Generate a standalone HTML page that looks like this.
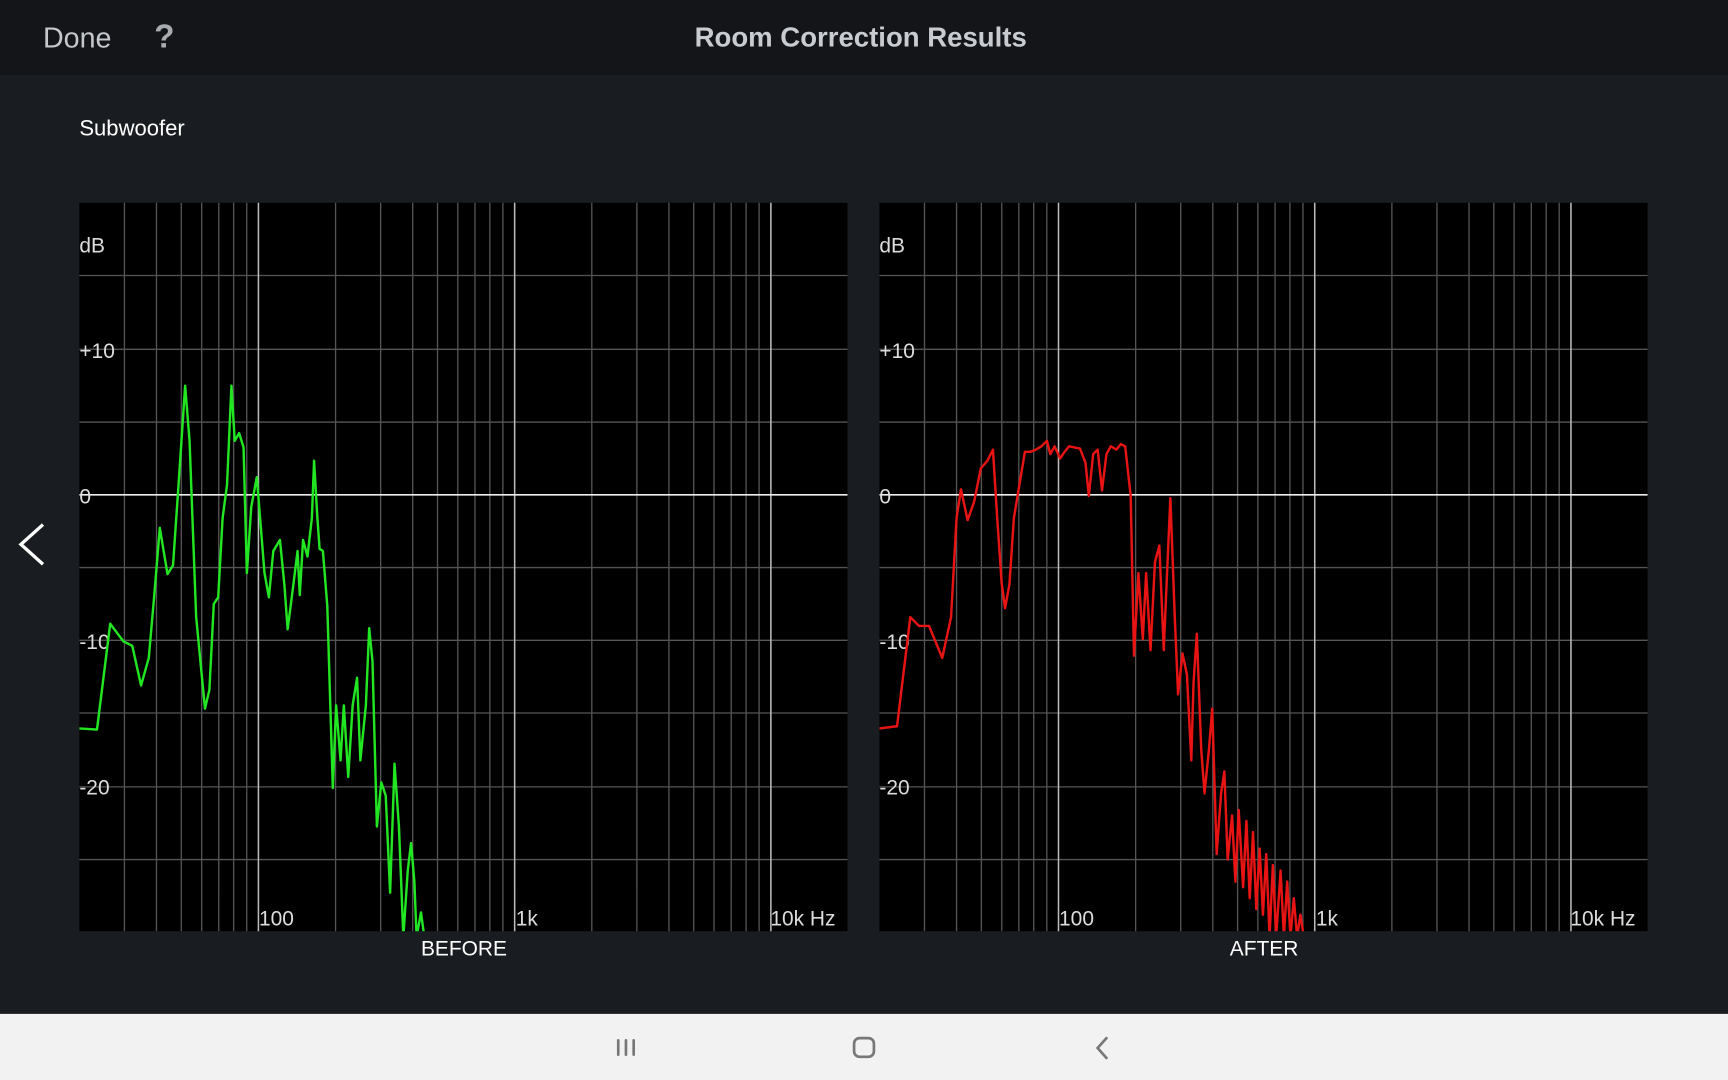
<!DOCTYPE html>
<html><head><meta charset="utf-8"><style>
html,body{margin:0;padding:0;background:#191c21;width:1728px;height:1080px;overflow:hidden}
#s{position:absolute;left:0;top:0;width:1568px;height:980px;transform:scale(1.10204);transform-origin:0 0;background:#191c21;font-family:"Liberation Sans",sans-serif}
.hdr{position:absolute;left:0;top:0;width:1568px;height:68px;background:#131519}
.t{position:absolute;white-space:nowrap}
.nav{position:absolute;left:0;top:920px;width:1568px;height:60px;background:#f2f2f2}
</style></head><body><div id="s">
<div class="hdr"></div>
<div class="t" style="left:39px;top:19px;font-size:26px;color:#c4c8cc">Done</div>
<div class="t" style="left:140px;top:17px;font-size:30px;font-weight:bold;color:#a8abb0">?</div>
<div class="t" style="left:0;width:1562px;text-align:center;top:20px;font-size:25px;font-weight:bold;color:#c8ccd0">Room Correction Results</div>
<div class="t" style="left:72px;top:106px;font-size:20px;color:#fff">Subwoofer</div>
<svg width="1568" height="920" style="position:absolute;left:0;top:0" font-family="Liberation Sans, sans-serif">
<defs>
<symbol id="g" width="697" height="661" overflow="visible">
<rect width="697" height="661" fill="#000"/>
<g stroke="#555" stroke-width="1.2">
<line x1="0" x2="697" y1="66" y2="66"/><line x1="0" x2="697" y1="133" y2="133"/><line x1="0" x2="697" y1="199" y2="199"/><line x1="0" x2="697" y1="331" y2="331"/><line x1="0" x2="697" y1="397" y2="397"/><line x1="0" x2="697" y1="463" y2="463"/><line x1="0" x2="697" y1="530" y2="530"/><line x1="0" x2="697" y1="596" y2="596"/>
<path d="M40.9 0V661M70 0V661M92.5 0V661M111 0V661M126.5 0V661M140 0V661M151.9 0V661M232.5 0V661M273.4 0V661M302.5 0V661M325 0V661M343.4 0V661M359 0V661M372.5 0V661M384.3 0V661M465 0V661M505.9 0V661M535 0V661M557.5 0V661M575.9 0V661M591.5 0V661M605 0V661M616.8 0V661"/>
</g>
<g stroke="#bbb" stroke-width="1.4"><path d="M162.5 0V661M395 0V661M627.5 0V661"/></g>
<line x1="0" x2="697" y1="265" y2="265" stroke="#eee" stroke-width="1.4"/>
</symbol>
<clipPath id="c1"><rect x="72" y="184" width="697" height="661"/></clipPath>
<clipPath id="c2"><rect x="798" y="184" width="697" height="661"/></clipPath>
</defs>
<use href="#g" x="72" y="184"/>
<use href="#g" x="798" y="184"/>
<g fill="#ddd" font-size="19">
<text x="72" y="229">dB</text><text x="72" y="325">+10</text><text x="72" y="457">0</text><text x="72" y="589">-10</text><text x="72" y="721">-20</text>
<text x="235" y="840">100</text><text x="468" y="840">1k</text><text x="699" y="840">10k Hz</text>
<text x="798" y="229">dB</text><text x="798" y="325">+10</text><text x="798" y="457">0</text><text x="798" y="589">-10</text><text x="798" y="721">-20</text>
<text x="961" y="840">100</text><text x="1194" y="840">1k</text><text x="1425" y="840">10k Hz</text>
</g>
<g fill="#fff" font-size="19" text-anchor="middle"><text x="421" y="867">BEFORE</text><text x="1147" y="867">AFTER</text></g>
<polyline clip-path="url(#c1)" fill="none" stroke="#22e622" stroke-width="2.2" stroke-linejoin="round" points="72,661 88,662 100,566 112,582 120,586 128,622 135,597 140,540 145,479 152,521 157,513 162,440 168,350 172,400 178,560 186,643 190,626 194,548 198,542 202,470 206,440 210,350 213,400 217,393 221,406 224,520 228,460 233,433 236,470 240,520 244,542 248,500 254,490 258,530 261,571 265,540 270,500 272,540 275,490 279,505 283,470 285,418 288,470 290,498 293,500 297,550 302,715 305,640 309,690 312,640 316,705 320,640 324,615 327,690 332,640 335,570 338,600 342,750 346,710 350,722 354,810 358,693 362,750 366,850 370,790 373,765 376,800 378,850 382,828 385,850"/>
<polyline clip-path="url(#c2)" fill="none" stroke="#e81414" stroke-width="2.2" stroke-linejoin="round" points="798,661 814,659 826,560 834,568 843,568 855,597 863,560 868,470 872,444 878,472 884,455 890,425 896,418 901,408 905,472 909,530 912,552 916,530 920,470 925,440 930,410 935,410 940,408 945,405 950,400 953,412 957,405 962,416 966,410 970,405 975,406 980,407 985,420 988,450 992,412 996,408 1000,445 1004,412 1008,405 1013,408 1017,403 1021,405 1026,450 1029,595 1033,520 1037,580 1040,520 1044,590 1048,510 1052,495 1056,590 1059,520 1062,452 1066,560 1069,630 1073,593 1077,612 1081,690 1083,620 1086,575 1090,680 1093,720 1097,680 1100,643 1104,775 1108,720 1111,700 1114,780 1118,740 1121,800 1124,735 1128,805 1131,745 1134,815 1137,755 1140,825 1143,770 1146,830 1149,775 1152,850 1155,785 1158,850 1162,790 1165,850 1168,800 1171,850 1174,815 1177,850 1180,830 1183,850"/>
<path d="M39 476L19 494L39 512" fill="none" stroke="#fff" stroke-width="3"/>
</svg>
<div class="nav"></div>
<svg width="1568" height="60" style="position:absolute;left:0;top:920px">
<g stroke="#777" stroke-width="2.4" fill="none" stroke-linecap="round">
<path d="M561 24V37M568 24V37M575 24V37"/>
<rect x="775" y="22" width="18" height="17" rx="5"/>
<path d="M1004 22L996 31L1004 40"/>
</g>
</svg>
</div></body></html>
